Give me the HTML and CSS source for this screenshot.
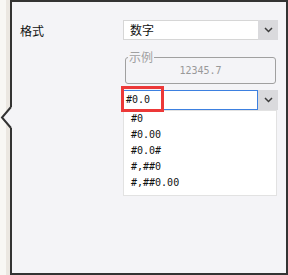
FILE: index.html
```html
<!DOCTYPE html>
<html lang="zh">

<head>
    <meta charset="UTF-8">
    <meta name="viewport" content="width=device-width, initial-scale=1.0">
    <title>格式</title>
    <link rel="stylesheet" href="styles.css">
</head>

<body>
    <div class="strip"></div>
    <div class="panel">
        <div class="form">
            <div class="label">格式</div>
            <div class="controls">
                <div class="select">
                    <div class="select-value">数字</div>
                    <div class="select-btn">
                        <svg width="9" height="6" viewBox="0 0 9 6"><polyline points="1,1 4.5,4.5 8,1" fill="none" stroke="#3c3c3c" stroke-width="1.5"/></svg>
                    </div>
                </div>

                <fieldset class="sample">
                    <legend>示例</legend>
                    <div class="sample-value">12345.7</div>
                </fieldset>

                <div class="combo">
                    <div class="combo-input">#0.0</div>
                    <div class="select-btn">
                        <svg width="9" height="6" viewBox="0 0 9 6"><polyline points="1,1 4.5,4.5 8,1" fill="none" stroke="#3c3c3c" stroke-width="1.5"/></svg>
                    </div>
                    <div class="mark"></div>
                </div>

                <ul class="list">
                    <li>#0</li>
                    <li>#0.00</li>
                    <li>#0.0#</li>
                    <li>#,##0</li>
                    <li>#,##0.00</li>
                </ul>
            </div>
        </div>
    </div>

    <!-- callout arrow on the left edge -->
    <svg class="notch" width="14" height="34" viewBox="0 0 14 34">
        <polygon points="12.5,7 10,7 2,17.5 10,28 12.5,28" fill="#f4f4f7"/>
        <polyline points="11,7 2,17.5 11,28" fill="none" stroke="#333" stroke-width="2"/>
    </svg>
</body>

</html>
```

FILE: styles.css
```css
body {
    margin: 0;
    display: flex;
    height: 275px;
    background: #ebe7e1;
    font-family: "Noto Sans CJK SC", sans-serif;
    font-size: 12px;
    color: #111;
    overflow: hidden;
}

.strip {
    width: 6px;
    background: #f8f7f4;
    border-right: 4px solid #ebe7e1;
    flex-shrink: 0;
}

.panel {
    box-sizing: border-box;
    width: 278px;
    height: 275px;
    border: 2px solid #333;
    background: #f4f4f7;
    padding: 18px 8px 0 8px;
}

.form {
    display: grid;
    grid-template-columns: 103px 1fr;
}

.label {
    height: 20px;
    line-height: 20px;
    padding-top: 1px;
}

.controls {
    display: flex;
    flex-direction: column;
}

.select,
.combo {
    display: flex;
    height: 20px;
}

.select-value {
    flex: 1;
    box-sizing: border-box;
    background: #fff;
    border: 1px solid #d6d6d6;
    border-right: none;
    padding-left: 6px;
    line-height: 18px;
}

.select-btn {
    width: 20px;
    background: #dadadd;
    display: flex;
    align-items: center;
    justify-content: center;
}

.sample {
    margin: 11px 2px 0 2px;
    padding: 0;
    border: 1px solid #a0a0a0;
    border-radius: 3px;
    min-width: 0;
}

.sample legend {
    margin-left: 2px;
    padding: 0 1px;
    line-height: 12px;
    color: #a0a0a0;
}

.sample-value {
    height: 16px;
    padding-bottom: 4px;
    line-height: 16px;
    text-align: center;
    font-family: "DejaVu Sans Mono", monospace;
    font-size: 10px;
    color: #999;
}

.combo {
    margin-top: 6px;
    position: relative;
}

.combo-input {
    flex: 1;
    box-sizing: border-box;
    background: #fff;
    border: 1px solid #3d80e0;
    padding-left: 2px;
    line-height: 18px;
    font-family: "DejaVu Sans Mono", monospace;
    font-size: 10px;
}

.mark {
    position: absolute;
    left: -2px;
    top: -4px;
    box-sizing: border-box;
    width: 43px;
    height: 26px;
    border: 3px solid #ec3838;
}

.list {
    list-style: none;
    margin: 0 1px 0 0;
    padding: 0 0 4px 0;
    background: #fff;
    border: 1px solid #e2e2e2;
    font-family: "DejaVu Sans Mono", monospace;
    font-size: 10px;
}

.list li {
    height: 16px;
    line-height: 16px;
    padding-left: 7px;
}

.notch {
    position: absolute;
    left: 0;
    top: 100px;
}
```
